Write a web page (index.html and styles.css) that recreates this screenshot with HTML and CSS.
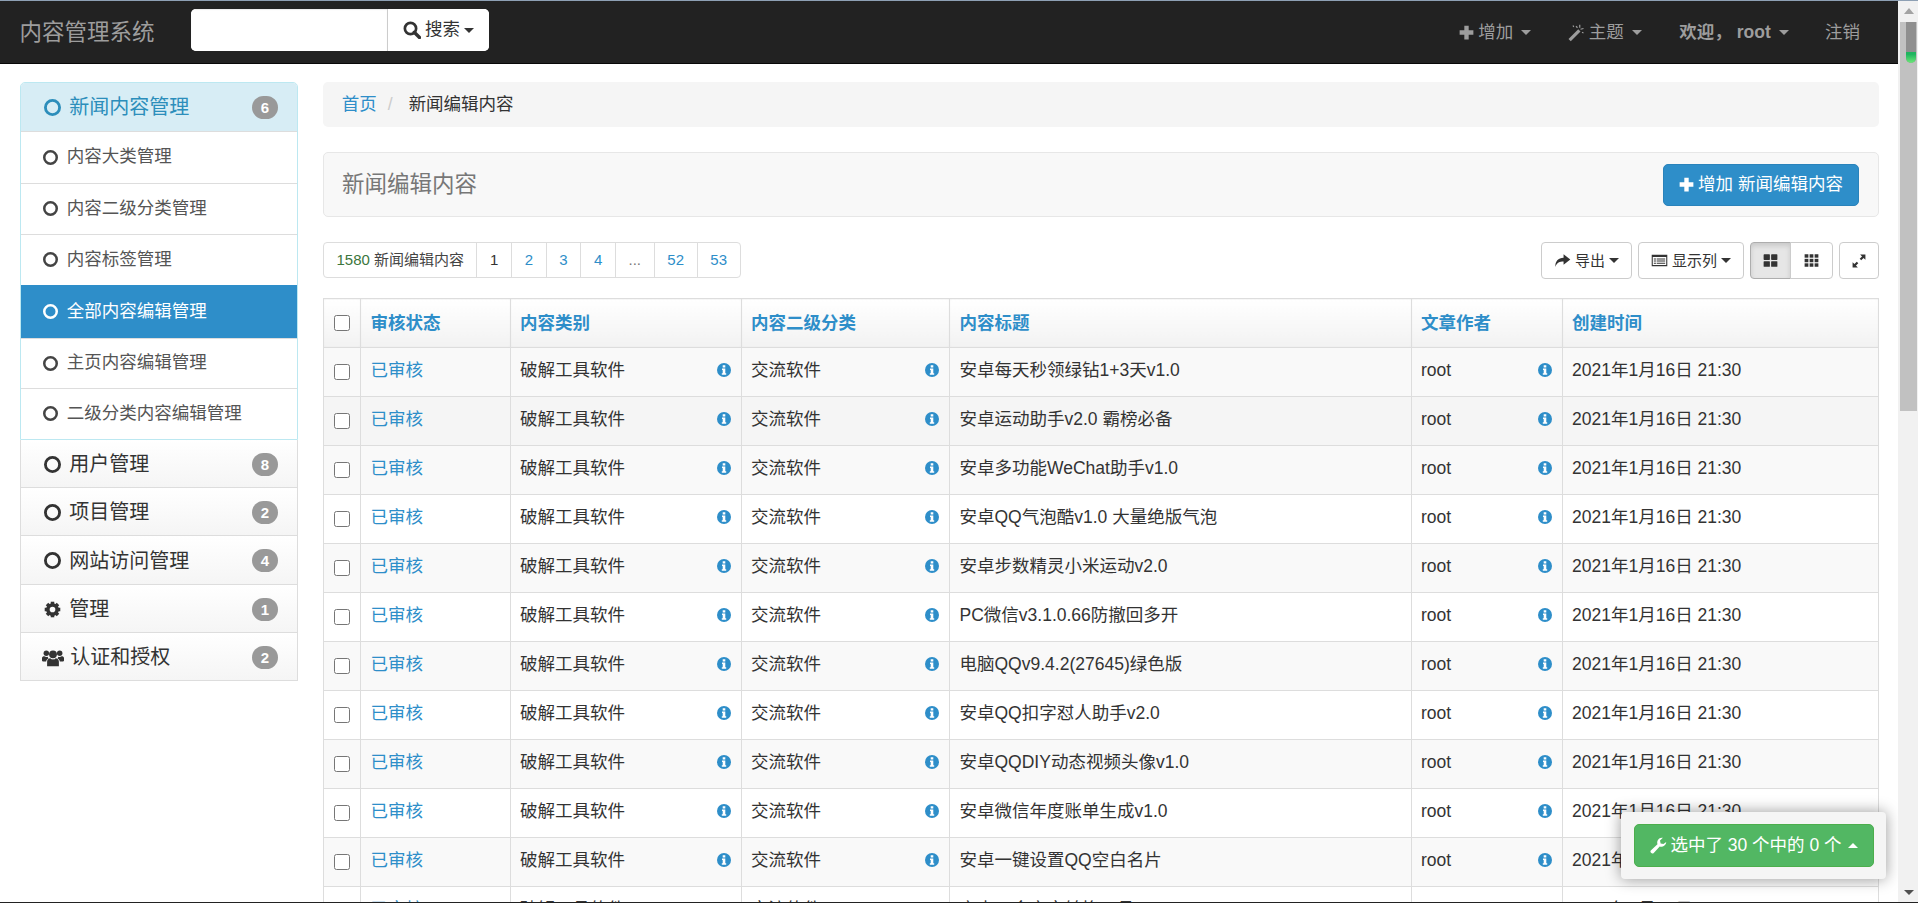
FILE: index.html
```html
<!DOCTYPE html>
<html lang="zh-CN">
<head>
<meta charset="utf-8">
<title>内容管理系统</title>
<link rel="stylesheet" href="styles.css">
</head>
<body>
<svg class="defs" width="0" height="0" aria-hidden="true">
  <symbol id="i-plus" viewBox="0 0 24 24"><path d="M8.5 1h7v7.5H23v7h-7.500V23h-7v-7.500H1v-7h7.500z"/></symbol>
  <symbol id="i-search" viewBox="0 0 24 24"><circle cx="10" cy="10" r="7.500" fill="none" stroke="currentColor" stroke-width="3.600"/><path d="M15 15l7 7" stroke="currentColor" stroke-width="4.500" stroke-linecap="round"/></symbol>
  <symbol id="i-wand" viewBox="0 0 24 24"><path d="M2 20L15 7l3 3L5 23z"/><path d="M8 2l1 2M17 1v4M22 6l-4 1M22 12l-2-1M12 3l2 2" stroke="currentColor" stroke-width="1.600"/></symbol>
  <symbol id="i-ring" viewBox="0 0 24 24"><circle cx="12" cy="12" r="10" fill="none" stroke="currentColor" stroke-width="4"/></symbol>
  <symbol id="i-cog" viewBox="0 0 24 24"><circle cx="12" cy="12" r="6.500" fill="none" stroke="currentColor" stroke-width="5"/><g><rect x="9.500" y="1" width="5" height="5"/><rect x="9.500" y="18" width="5" height="5"/><rect x="1" y="9.500" width="5" height="5"/><rect x="18" y="9.500" width="5" height="5"/><rect x="9.500" y="1" width="5" height="5" transform="rotate(45 12 12)"/><rect x="9.500" y="18" width="5" height="5" transform="rotate(45 12 12)"/><rect x="1" y="9.500" width="5" height="5" transform="rotate(45 12 12)"/><rect x="18" y="9.500" width="5" height="5" transform="rotate(45 12 12)"/></g></symbol>
  <symbol id="i-users" viewBox="0 0 28 24"><circle cx="14" cy="8" r="5"/><path d="M6.500 23v-5.500c0-3 2-4.500 4-4.500 1 1 2 1.500 3.500 1.500s2.500-.5 3.500-1.500c2 0 4 1.500 4 4.500V23z"/><circle cx="5.500" cy="6.500" r="3.500"/><circle cx="22.500" cy="6.500" r="3.500"/><path d="M0 16v-3c0-2 1.500-2.500 3-2.500 1.500 1 3 1 4.500.5-.2 1 .3 1.500 1 2-2 1-3 2.500-3.200 4H1z"/><path d="M28 16v-3c0-2-1.500-2.500-3-2.500-1.500 1-3 1-4.500.5.200 1-.3 1.500-1 2 2 1 3 2.500 3.200 4H27z"/></symbol>
  <symbol id="i-info" viewBox="0 0 14 14"><circle cx="7" cy="7" r="7"/><path fill="#fff" d="M5.700 2.300h2.600v2.200H5.700zM5 5.500h3.300v4.700h.9v1.500H4.800v-1.500h.9V7H5z"/></symbol>
  <symbol id="i-share" viewBox="0 0 24 24"><path d="M13.500 3L23 10.500 13.500 18v-4.500C8 13.500 4 15 2 21c-.8-8 4-12.500 11.500-13z"/></symbol>
  <symbol id="i-list" viewBox="0 0 24 24"><path fill-rule="evenodd" d="M1 4h22v16H1zM2.500 7v11.500h19V7z"/><path d="M4 9h3v1.500H4zM8 9h12v1.500H8zM4 12h3v1.500H4zM8 12h12v1.500H8zM4 15h3v1.500H4zM8 15h12v1.500H8z"/></symbol>
  <symbol id="i-large" viewBox="0 0 24 24"><rect x="1" y="2" width="10" height="9" rx="1"/><rect x="13" y="2" width="10" height="9" rx="1"/><rect x="1" y="13" width="10" height="9" rx="1"/><rect x="13" y="13" width="10" height="9" rx="1"/></symbol>
  <symbol id="i-th" viewBox="0 0 24 24"><rect x="1" y="2" width="6" height="5.500"/><rect x="9" y="2" width="6" height="5.500"/><rect x="17" y="2" width="6" height="5.500"/><rect x="1" y="9.300" width="6" height="5.500"/><rect x="9" y="9.300" width="6" height="5.500"/><rect x="17" y="9.300" width="6" height="5.500"/><rect x="1" y="16.500" width="6" height="5.500"/><rect x="9" y="16.500" width="6" height="5.500"/><rect x="17" y="16.500" width="6" height="5.500"/></symbol>
  <symbol id="i-resize" viewBox="0 0 24 24"><path d="M14 1h9v9l-3.200-3.200-4 4-2.600-2.600 4-4zM10 23H1v-9l3.200 3.200 4-4 2.600 2.600-4 4z"/></symbol>
  <symbol id="i-wrench" viewBox="0 0 24 24"><path d="M23 6.500a6.500 6.500 0 0 1-8.700 6.100L6 21.500a2.600 2.600 0 0 1-3.600-3.600l8.900-8.300A6.500 6.500 0 0 1 18.500 1l-3.800 3.800.8 3.700 3.700.8z"/></symbol>
</svg>

<div class="window">
  <div class="page">
    <nav class="navbar">
      <a class="brand">内容管理系统</a>
      <form class="search">
        <input class="search-input" type="text" aria-label="搜索">
        <button class="search-btn" type="button"><svg class="ico ico-18"><use href="#i-search"/></svg>搜索<span class="caret"></span></button>
      </form>
      <ul class="nav-right">
        <li class="nav-item nav-add"><svg class="ico ico-15"><use href="#i-plus"/></svg>增加<span class="caret nav-caret"></span></li>
        <li class="nav-item"><svg class="ico ico-18"><use href="#i-wand"/></svg>主题<span class="caret nav-caret"></span></li>
        <li class="nav-item nav-user">欢迎，&nbsp;root<span class="caret nav-caret"></span></li>
        <li class="nav-item nav-logout">注销</li>
      </ul>
    </nav>

    <main class="main">
      <aside class="sidebar">
        <section class="panel panel-open">
          <header class="panel-head head-info"><svg class="ico head-ico"><use href="#i-ring"/></svg><span class="head-label">新闻内容管理</span><span class="badge">6</span></header>
          <a class="side-item"><svg class="ico item-ico"><use href="#i-ring"/></svg>内容大类管理</a>
          <a class="side-item"><svg class="ico item-ico"><use href="#i-ring"/></svg>内容二级分类管理</a>
          <a class="side-item"><svg class="ico item-ico"><use href="#i-ring"/></svg>内容标签管理</a>
          <a class="side-item side-active"><svg class="ico item-ico"><use href="#i-ring"/></svg>全部内容编辑管理</a>
          <a class="side-item side-after"><svg class="ico item-ico"><use href="#i-ring"/></svg>主页内容编辑管理</a>
          <a class="side-item"><svg class="ico item-ico"><use href="#i-ring"/></svg>二级分类内容编辑管理</a>
        </section>
        <section class="panel"><header class="panel-head"><svg class="ico head-ico"><use href="#i-ring"/></svg><span class="head-label">用户管理</span><span class="badge">8</span></header></section>
        <section class="panel"><header class="panel-head"><svg class="ico head-ico"><use href="#i-ring"/></svg><span class="head-label">项目管理</span><span class="badge">2</span></header></section>
        <section class="panel"><header class="panel-head"><svg class="ico head-ico"><use href="#i-ring"/></svg><span class="head-label">网站访问管理</span><span class="badge">4</span></header></section>
        <section class="panel"><header class="panel-head"><svg class="ico head-ico"><use href="#i-cog"/></svg><span class="head-label">管理</span><span class="badge">1</span></header></section>
        <section class="panel"><header class="panel-head"><svg class="ico head-ico head-users"><use href="#i-users"/></svg><span class="head-label">认证和授权</span><span class="badge">2</span></header></section>
      </aside>

      <div class="content">
        <ol class="breadcrumb">
          <li><a class="link">首页</a></li>
          <li class="crumb-sep">/</li>
          <li>新闻编辑内容</li>
        </ol>

        <div class="title-bar">
          <h1 class="title">新闻编辑内容</h1>
          <button class="btn-add" type="button"><svg class="ico ico-15"><use href="#i-plus"/></svg>增加 新闻编辑内容</button>
        </div>

        <div class="toolbar">
          <ul class="pager">
            <li class="pager-cell pager-first"><span class="count">1580</span> 新闻编辑内容</li>
            <li class="pager-cell pager-current">1</li>
            <li class="pager-cell link">2</li>
            <li class="pager-cell link">3</li>
            <li class="pager-cell link">4</li>
            <li class="pager-cell pager-dots">...</li>
            <li class="pager-cell link">52</li>
            <li class="pager-cell pager-last link">53</li>
          </ul>
          <div class="tools">
            <button class="tool tool-export" type="button"><svg class="ico ico-17"><use href="#i-share"/></svg>导出<span class="caret"></span></button>
            <button class="tool tool-cols" type="button"><svg class="ico ico-17"><use href="#i-list"/></svg>显示列<span class="caret"></span></button>
            <div class="tool-group">
              <button class="tool tool-view tool-on" type="button"><svg class="ico ico-15"><use href="#i-large"/></svg></button>
              <button class="tool tool-view tool-view2" type="button"><svg class="ico ico-15"><use href="#i-th"/></svg></button>
            </div>
            <button class="tool tool-full" type="button"><svg class="ico ico-14"><use href="#i-resize"/></svg></button>
          </div>
        </div>

        <table class="grid">
          <colgroup><col class="c-check"><col class="c-state"><col class="c-cat"><col class="c-sub"><col class="c-title"><col class="c-author"><col class="c-time"></colgroup>
          <thead>
            <tr><th class="cell-check"><input type="checkbox" aria-label="全选"></th><th>审核状态</th><th>内容类别</th><th>内容二级分类</th><th>内容标题</th><th>文章作者</th><th>创建时间</th></tr>
          </thead>
          <tbody>
            <tr><td class="cell-check"><input type="checkbox"></td><td><a class="link">已审核</a></td><td class="has-info">破解工具软件<svg class="info"><use href="#i-info"/></svg></td><td class="has-info">交流软件<svg class="info"><use href="#i-info"/></svg></td><td>安卓每天秒领绿钻1+3天v1.0</td><td class="has-info">root<svg class="info"><use href="#i-info"/></svg></td><td>2021年1月16日 21:30</td></tr>
            <tr class="row-hover"><td class="cell-check"><input type="checkbox"></td><td><a class="link">已审核</a></td><td class="has-info">破解工具软件<svg class="info"><use href="#i-info"/></svg></td><td class="has-info">交流软件<svg class="info"><use href="#i-info"/></svg></td><td>安卓运动助手v2.0 霸榜必备</td><td class="has-info">root<svg class="info"><use href="#i-info"/></svg></td><td>2021年1月16日 21:30</td></tr>
            <tr><td class="cell-check"><input type="checkbox"></td><td><a class="link">已审核</a></td><td class="has-info">破解工具软件<svg class="info"><use href="#i-info"/></svg></td><td class="has-info">交流软件<svg class="info"><use href="#i-info"/></svg></td><td>安卓多功能WeChat助手v1.0</td><td class="has-info">root<svg class="info"><use href="#i-info"/></svg></td><td>2021年1月16日 21:30</td></tr>
            <tr><td class="cell-check"><input type="checkbox"></td><td><a class="link">已审核</a></td><td class="has-info">破解工具软件<svg class="info"><use href="#i-info"/></svg></td><td class="has-info">交流软件<svg class="info"><use href="#i-info"/></svg></td><td>安卓QQ气泡酷v1.0 大量绝版气泡</td><td class="has-info">root<svg class="info"><use href="#i-info"/></svg></td><td>2021年1月16日 21:30</td></tr>
            <tr><td class="cell-check"><input type="checkbox"></td><td><a class="link">已审核</a></td><td class="has-info">破解工具软件<svg class="info"><use href="#i-info"/></svg></td><td class="has-info">交流软件<svg class="info"><use href="#i-info"/></svg></td><td>安卓步数精灵小米运动v2.0</td><td class="has-info">root<svg class="info"><use href="#i-info"/></svg></td><td>2021年1月16日 21:30</td></tr>
            <tr><td class="cell-check"><input type="checkbox"></td><td><a class="link">已审核</a></td><td class="has-info">破解工具软件<svg class="info"><use href="#i-info"/></svg></td><td class="has-info">交流软件<svg class="info"><use href="#i-info"/></svg></td><td>PC微信v3.1.0.66防撤回多开</td><td class="has-info">root<svg class="info"><use href="#i-info"/></svg></td><td>2021年1月16日 21:30</td></tr>
            <tr><td class="cell-check"><input type="checkbox"></td><td><a class="link">已审核</a></td><td class="has-info">破解工具软件<svg class="info"><use href="#i-info"/></svg></td><td class="has-info">交流软件<svg class="info"><use href="#i-info"/></svg></td><td>电脑QQv9.4.2(27645)绿色版</td><td class="has-info">root<svg class="info"><use href="#i-info"/></svg></td><td>2021年1月16日 21:30</td></tr>
            <tr><td class="cell-check"><input type="checkbox"></td><td><a class="link">已审核</a></td><td class="has-info">破解工具软件<svg class="info"><use href="#i-info"/></svg></td><td class="has-info">交流软件<svg class="info"><use href="#i-info"/></svg></td><td>安卓QQ扣字怼人助手v2.0</td><td class="has-info">root<svg class="info"><use href="#i-info"/></svg></td><td>2021年1月16日 21:30</td></tr>
            <tr><td class="cell-check"><input type="checkbox"></td><td><a class="link">已审核</a></td><td class="has-info">破解工具软件<svg class="info"><use href="#i-info"/></svg></td><td class="has-info">交流软件<svg class="info"><use href="#i-info"/></svg></td><td>安卓QQDIY动态视频头像v1.0</td><td class="has-info">root<svg class="info"><use href="#i-info"/></svg></td><td>2021年1月16日 21:30</td></tr>
            <tr><td class="cell-check"><input type="checkbox"></td><td><a class="link">已审核</a></td><td class="has-info">破解工具软件<svg class="info"><use href="#i-info"/></svg></td><td class="has-info">交流软件<svg class="info"><use href="#i-info"/></svg></td><td>安卓微信年度账单生成v1.0</td><td class="has-info">root<svg class="info"><use href="#i-info"/></svg></td><td>2021年1月16日 21:30</td></tr>
            <tr><td class="cell-check"><input type="checkbox"></td><td><a class="link">已审核</a></td><td class="has-info">破解工具软件<svg class="info"><use href="#i-info"/></svg></td><td class="has-info">交流软件<svg class="info"><use href="#i-info"/></svg></td><td>安卓一键设置QQ空白名片</td><td class="has-info">root<svg class="info"><use href="#i-info"/></svg></td><td>2021年1月16日 21:30</td></tr>
            <tr><td class="cell-check"><input type="checkbox"></td><td><a class="link">已审核</a></td><td class="has-info">破解工具软件<svg class="info"><use href="#i-info"/></svg></td><td class="has-info">交流软件<svg class="info"><use href="#i-info"/></svg></td><td>安卓一个文字转换工具v1.0</td><td class="has-info">root<svg class="info"><use href="#i-info"/></svg></td><td>2021年1月16日 21:30</td></tr>
          </tbody>
        </table>
      </div>
    </main>

    <div class="action-float">
      <button class="btn-action" type="button"><svg class="ico ico-18"><use href="#i-wrench"/></svg>选中了 30 个中的 0 个<span class="caret caret-up"></span></button>
    </div>
  </div>

  <div class="scrollbar" aria-hidden="true">
    <span class="arrow-up"></span>
    <div class="thumb"><div class="meter"><div class="meter-fill"></div></div></div>
    <div class="track"></div>
    <span class="arrow-down"></span>
  </div>
</div>
</body>
</html>
```
FILE: styles.css
```css
* { box-sizing: border-box; }
html, body { margin: 0; height: 903px; overflow: hidden; background: #fff; }
body {
  font-family: "Liberation Sans", "Noto Sans CJK SC", sans-serif;
  font-size: 17.5px;
  line-height: 1.43;
  color: #333;
}
ul, ol { list-style: none; margin: 0; padding: 0; }
button { font: inherit; cursor: pointer; }
.defs { position: absolute; }

.window {
  display: flex;
  height: 903px;
  border-top: 1px solid #8ea0b4;
  border-bottom: 1px solid #222;
  overflow: hidden;
}
.page { position: relative; width: 1898px; flex: none; overflow: hidden; }

.ico { fill: currentColor; flex: none; display: inline-block; vertical-align: middle; }
.ico-14 { width: 14px; height: 14px; }
.ico-15 { width: 15px; height: 15px; }
.ico-17 { width: 17px; height: 17px; }
.ico-18 { width: 18px; height: 18px; }

.caret {
  display: inline-block;
  width: 0;
  height: 0;
  margin-left: 4px;
  vertical-align: middle;
  border-top: 5px solid currentColor;
  border-left: 5px solid transparent;
  border-right: 5px solid transparent;
}
.caret-up { border-top: 0; border-bottom: 5px solid currentColor; margin-left: 3px; }
.link { color: #2e8ec9; }

/* navbar */
.navbar {
  display: flex;
  align-items: center;
  height: 63px;
  padding: 2px 18px 0 19.5px;
  background: #222;
  border-bottom: 1px solid #080808;
  color: #9d9d9d;
}
.brand { font-size: 22.5px; width: 171.500px; flex: none; }
.search {
  display: flex;
  align-self: flex-start;
  margin-top: 6px;
  height: 42px;
  width: 298px;
  background: #fff;
  border-radius: 5px;
  overflow: hidden;
}
.search-input {
  width: 197px;
  border: 0;
  border-right: 1px solid #ccc;
  box-shadow: inset 0 1px 1px rgba(0, 0, 0, .08);
  outline: 0;
  background: #fff;
}
.search-btn {
  display: flex;
  align-items: center;
  justify-content: center;
  gap: 4px;
  flex: 1;
  padding: 0;
  border: 0;
  background: #fff;
  color: #333;
}
.search-btn .caret { margin-left: 0; }
.nav-right { display: flex; margin-left: auto; }
.nav-item { display: flex; align-items: center; gap: 4px; padding: 0 18.75px; }
.nav-add { padding-right: 16.75px; }
.nav-user { font-weight: 700; }
.nav-logout { padding-right: 20px; padding-left: 17.500px; }
.nav-caret { margin-left: 4px; }

/* layout */
.main { display: flex; gap: 25px; padding: 18px 19px 0 19.5px; }
.sidebar { width: 278.500px; flex: none; }
.content { width: 1556px; flex: none; }

/* sidebar */
.panel { border: 1px solid #ddd; border-top: 0; background: #fff; }
.panel-open { border: 1px solid #bce8f1; border-radius: 5px 5px 0 0; }
.panel-head {
  display: flex;
  align-items: center;
  height: 47.400px;
  padding: 2px 19px 0 23px;
  font-size: 20px;
  background: linear-gradient(#fff, #f5f5f5);
}
.head-info {
  height: 48.500px;
  padding-top: 2px;
  color: #2c8ebb;
  background: #d7edf5;
  border-bottom: 1px solid #ddd;
  border-radius: 4px 4px 0 0;
}
.head-ico { width: 17px; height: 17px; margin-right: 8.800px; }
.head-users { width: 22px; height: 19px; margin: 0 6.800px 0 -2px; }
.head-label { flex: 1; }
.badge {
  width: 26px;
  height: 23px;
  border-radius: 12px;
  background: #999;
  color: #fff;
  font-size: 15px;
  font-weight: 700;
  line-height: 23px;
  text-align: center;
}
.side-item {
  display: flex;
  align-items: center;
  height: 51px;
  padding-left: 22.5px;
  border-top: 1px solid #ddd;
  color: #555;
}
.side-item:first-of-type { border-top: 0; }
.item-ico { width: 15px; height: 15px; margin-right: 8.800px; color: #444; }
.side-active { background: #2e8ec9; border-color: #2e8ec9; color: #fff; height: 53px; }
.side-active .item-ico { color: #fff; }
.side-after { height: 50px; }

/* breadcrumb */
.breadcrumb {
  display: flex;
  align-items: center;
  height: 45px;
  margin-bottom: 25px;
  padding: 0 18.75px;
  background: #f5f5f5;
  border-radius: 5px;
}
.crumb-sep { color: #ccc; margin: 0 16px 0 11px; }

/* title bar */
.title-bar {
  display: flex;
  align-items: center;
  justify-content: space-between;
  height: 65px;
  margin-bottom: 25px;
  padding: 0 19px 0 18px;
  background: #f8f8f8;
  border: 1px solid #e7e7e7;
  border-radius: 5px;
}
.title { margin: 2px 0 0; font-size: 22.5px; font-weight: 400; color: #777; }
.btn-add {
  display: flex;
  align-items: center;
  justify-content: center;
  gap: 4px;
  width: 196px;
  height: 42px;
  padding: 0;
  border: 1px solid #2a83bb;
  border-radius: 5px;
  background: #2e8ec9;
  color: #fff;
}

/* toolbar */
.toolbar { display: flex; justify-content: space-between; align-items: flex-start; height: 37px; margin-bottom: 19px; font-size: 15px; }
.pager { display: flex; height: 36px; }
.pager-cell {
  display: flex;
  align-items: center;
  gap: 4px;
  padding: 0 12.65px;
  border: 1px solid #ddd;
  margin-left: -1px;
  background: #fff;
}
.pager-first { margin-left: 0; padding: 0 12.5px; border-radius: 4px 0 0 4px; color: #444; }
.pager-last { border-radius: 0 4px 4px 0; }
.pager-current { color: #333; }
.pager-dots { color: #777; }
.count { color: #3c763d; }
.tools { display: flex; gap: 6px; }
.tool {
  display: flex;
  align-items: center;
  justify-content: center;
  gap: 4px;
  height: 37px;
  padding: 0;
  border: 1px solid #ccc;
  border-radius: 4px;
  background: #fff;
  color: #333;
}
.tool .caret { margin-left: 0; }
.tool-export { width: 91px; }
.tool-cols { width: 106px; }
.tool-group { display: flex; }
.tool-view { width: 41px; border-radius: 4px 0 0 4px; }
.tool-view2 { width: 43px; margin-left: -1px; border-radius: 0 4px 4px 0; }
.tool-on { background: #e6e6e6; border-color: #adadad; box-shadow: inset 0 3px 5px rgba(0, 0, 0, .125); }
.tool-full { width: 40px; }

/* table */
.grid { table-layout: fixed; width: 1555px; border-collapse: collapse; background: #fff; }
.c-check { width: 37px; }
.c-state { width: 149.500px; }
.c-cat { width: 231px; }
.c-sub { width: 208.500px; }
.c-title { width: 461.500px; }
.c-author { width: 151px; }
.c-time { width: 316.500px; }
.grid th, .grid td { height: 49px; padding: 0 10px 2px 9.500px; border: 1px solid #ddd; text-align: left; white-space: nowrap; font-weight: 400; }
.grid th { padding: 2px 10px 0 9.500px; color: #2e8ec9; font-weight: 700; background: linear-gradient(#fff, #f2f2f2); box-shadow: inset 0 0 2px rgba(0, 0, 0, .04); }
.grid tbody tr:nth-child(odd) { background: #f9f9f9; }
.grid tbody .row-hover { background: #f5f5f5; }
.grid .cell-check { padding: 0 0 0 10px; }
.grid tbody .cell-check { padding-bottom: 1px; }
.cell-check input { display: block; width: 16px; height: 16px; margin: 0; }
.has-info { position: relative; }
.info { position: absolute; right: 10px; top: 15px; width: 14px; height: 14px; fill: #2e8ec9; }

/* floating action */
.action-float {
  position: absolute;
  left: 1621px;
  top: 811px;
  width: 265px;
  height: 67px;
  display: flex;
  align-items: center;
  justify-content: center;
  background: #f5f5f5;
  border-radius: 4px;
  box-shadow: 0 0 15px rgba(0, 0, 0, .4);
}
.btn-action {
  display: flex;
  align-items: center;
  justify-content: center;
  gap: 3px;
  width: 240px;
  height: 43px;
  padding: 0;
  border: 1px solid #4cae4c;
  border-radius: 5px;
  background: #52b763;
  color: #fff;
  font-size: 17.5px;
}

/* scrollbar */
.scrollbar {
  display: flex;
  flex-direction: column;
  align-items: center;
  width: 20px;
  flex: none;
  background: #f1f1f1;
  padding: 7px 1px 7px 2px;
}
.arrow-up, .arrow-down { width: 0; height: 0; border-left: 5px solid transparent; border-right: 5px solid transparent; }
.arrow-up { border-bottom: 6px solid #a3a3a3; margin-bottom: 8px; }
.arrow-down { border-top: 5px solid #505050; margin-top: auto; }
.thumb { width: 17px; height: 389px; background: #c1c1c1; padding-left: 6px; }
.meter { width: 10px; height: 41px; background: #8f8f8f; border-radius: 0 0 5px 5px; overflow: hidden; display: flex; flex-direction: column; justify-content: flex-end; }
.meter-fill { height: 11px; background: linear-gradient(#1fb45f 20%, #6ee878); }
.track { flex: 1; }
```
